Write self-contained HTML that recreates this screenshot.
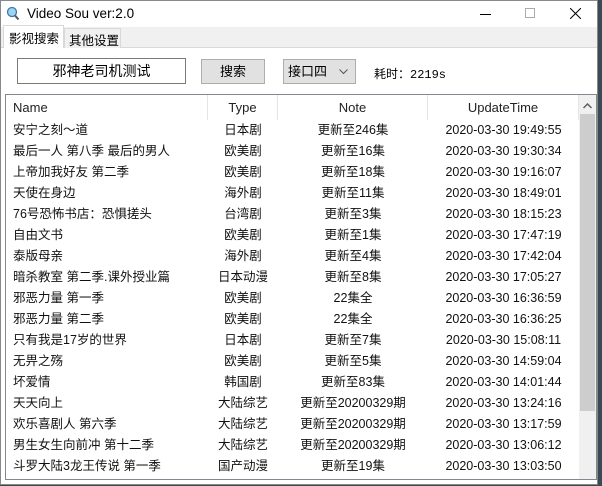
<!DOCTYPE html>
<html><head><meta charset="utf-8"><style>
*{margin:0;padding:0;box-sizing:border-box}
body{width:602px;height:486px;background:#3a4a55;position:relative;overflow:hidden;font-family:"Liberation Sans","Noto Sans CJK SC",sans-serif;font-size:12px;color:#000}
.win{position:absolute;left:0;top:0;width:598px;height:485px;background:#fff;border:1px solid #888}
.title{position:absolute;left:0;top:0;width:100%;height:27px;background:#fff}
.tabs{position:absolute;left:0;top:26px;width:100%;height:21px;background:#f0f0f0;border-bottom:1px solid #d9d9d9}
.abs{position:absolute}
.lv{position:absolute;left:4px;top:93px;width:592px;height:386px;border:1px solid #828790;background:#fff;overflow:hidden}
.hd{position:absolute;top:0;height:25px;line-height:25px;font-size:13px;color:#222;border-right:1px solid #e5e5e5}
.row{position:absolute;left:0;height:21px;line-height:21px;width:572px;font-size:12.5px;color:#111}
.row span{position:absolute;top:0}
.c{text-align:center}
</style></head><body>
<div class="win">
<div class="title">
<svg class="abs" style="left:5px;top:5px" width="14" height="15" viewBox="0 0 14 15"><circle cx="6" cy="6" r="4.5" fill="#9fd3f0" stroke="#3a7ab0" stroke-width="1.3"/><line x1="9" y1="9.5" x2="12.5" y2="13.5" stroke="#555" stroke-width="2"/></svg>
<div class="abs" style="left:26px;top:5px;font-size:13.5px">Video Sou ver:2.0</div>
<div class="abs" style="left:479px;top:13px;width:11px;height:1px;background:#000"></div>
<div class="abs" style="left:524px;top:7px;width:10px;height:10px;border:1px solid #aaa"></div>
<svg class="abs" style="left:569px;top:7px" width="11" height="11"><path d="M0 0L11 11M11 0L0 11" stroke="#000" stroke-width="1"/></svg>
</div>
<div class="tabs">
<div class="abs" style="left:2px;top:-2px;width:61px;height:23px;background:#fff;border:1px solid #d9d9d9;border-bottom:none;padding:2px 0 0 5px;font-size:12.5px">影视搜索</div>
<div class="abs" style="left:63px;top:1px;width:57px;height:20px;background:#f0f0f0;border:1px solid #d9d9d9;border-bottom:none;padding:1px 0 0 4px;font-size:12.5px">其他设置</div>
</div>
<div class="abs" style="left:16px;top:57px;width:169px;height:26px;border:1px solid #7a7a7a;text-align:center;line-height:24px;font-size:14px">邪神老司机测试</div>
<div class="abs" style="left:200px;top:58px;width:64px;height:25px;border:1px solid #adadad;background:#e1e1e1;text-align:center;line-height:23px;font-size:13px">搜索</div>
<div class="abs" style="left:282px;top:58px;width:73px;height:25px;border:1px solid #adadad;background:#e1e1e1;line-height:23px;padding-left:4px;font-size:13px">接口四<svg class="abs" style="left:55px;top:9px" width="9" height="6"><path d="M0.5 0.5L4.5 4.5L8.5 0.5" fill="none" stroke="#555"/></svg></div>
<div class="abs" style="left:373px;top:64px;font-size:12px;font-family:'Liberation Mono','Noto Sans CJK SC',monospace">耗时：2219s</div>
<div class="lv">
<div class="hd" style="left:0;width:202px;padding-left:7px">Name</div>
<div class="hd c" style="left:202px;width:70px">Type</div>
<div class="hd c" style="left:272px;width:150px">Note</div>
<div class="hd c" style="left:422px;width:151px">UpdateTime</div>
<div id="rows"></div>
<div class="abs" style="left:573px;top:0;width:17px;height:384px;background:#f0f0f0">
<svg class="abs" style="left:4px;top:8px" width="9" height="6"><path d="M0.5 5L4.5 1L8.5 5" fill="none" stroke="#606060" stroke-width="1.5"/></svg>
<div class="abs" style="left:1px;top:19px;width:15px;height:297px;background:#cdcdcd"></div>
</div>
</div>
</div>
<script>
var d=[["安宁之刻～道","日本剧","更新至246集","19:49:55"],["最后一人 第八季 最后的男人","欧美剧","更新至16集","19:30:34"],["上帝加我好友 第二季","欧美剧","更新至18集","19:16:07"],["天使在身边","海外剧","更新至11集","18:49:01"],["76号恐怖书店：恐惧搓头","台湾剧","更新至3集","18:15:23"],["自由文书","欧美剧","更新至1集","17:47:19"],["泰版母亲","海外剧","更新至4集","17:42:04"],["暗杀教室 第二季.课外授业篇","日本动漫","更新至8集","17:05:27"],["邪恶力量 第一季","欧美剧","22集全","16:36:59"],["邪恶力量 第二季","欧美剧","22集全","16:36:25"],["只有我是17岁的世界","日本剧","更新至7集","15:08:11"],["无畀之殇","欧美剧","更新至5集","14:59:04"],["坏爱情","韩国剧","更新至83集","14:01:44"],["天天向上","大陆综艺","更新至20200329期","13:24:16"],["欢乐喜剧人 第六季","大陆综艺","更新至20200329期","13:17:59"],["男生女生向前冲 第十二季","大陆综艺","更新至20200329期","13:06:12"],["斗罗大陆3龙王传说 第一季","国产动漫","更新至19集","13:03:50"]];
var h="";d.forEach(function(r,i){h+='<div class="row" style="top:'+(25+i*21)+'px"><span style="left:7px">'+r[0]+'</span><span class="c" style="left:202px;width:70px">'+r[1]+'</span><span class="c" style="left:272px;width:150px">'+r[2]+'</span><span class="c" style="left:422px;width:151px;font-size:12.5px">2020-03-30 '+r[3]+'</span></div>'});
document.getElementById("rows").innerHTML=h;
</script>
</body></html>
